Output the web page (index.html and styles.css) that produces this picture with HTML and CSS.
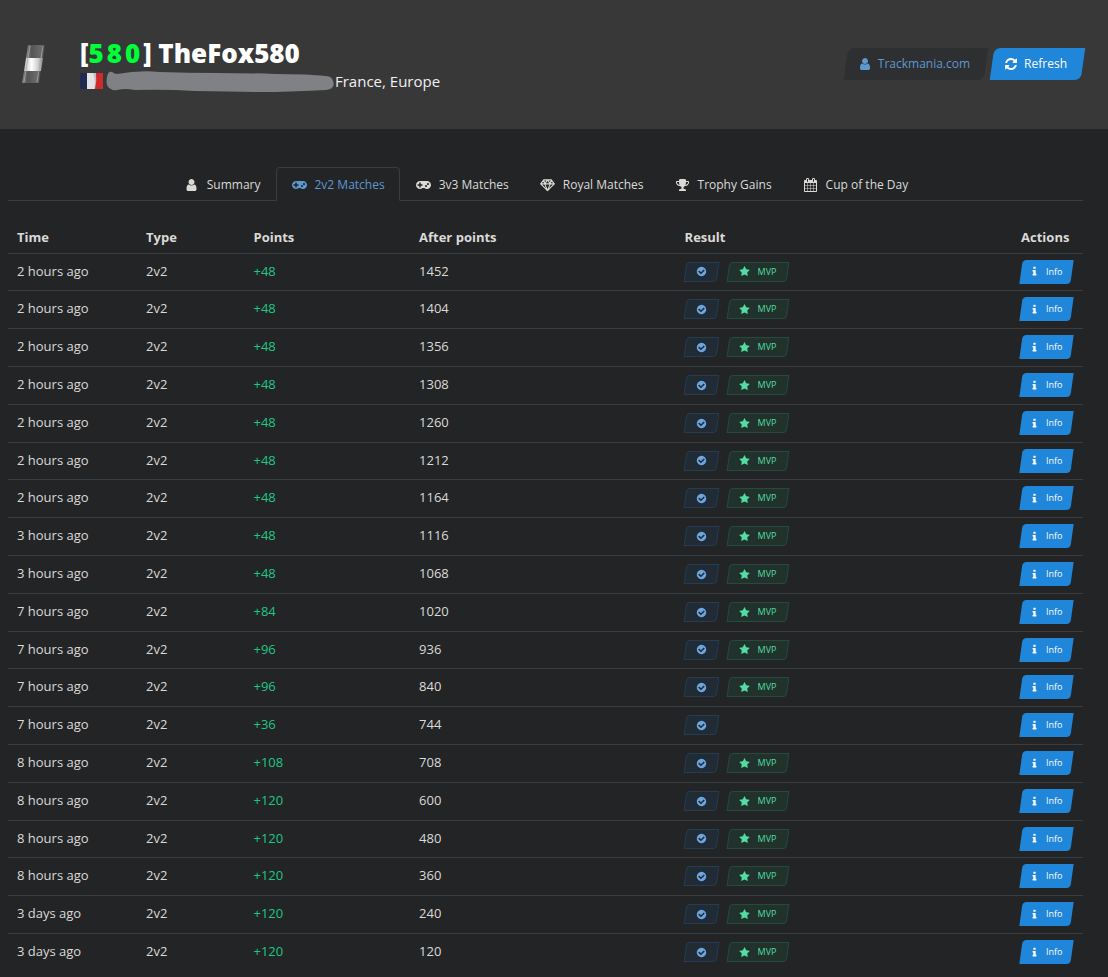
FILE: index.html
```
<!DOCTYPE html>
<html lang="en">
<head>
  <meta charset="UTF-8">
  <meta name="viewport" content="width=device-width, initial-scale=1.0">
  <title>TheFox580 - 2v2 Matches</title>
  <link rel="stylesheet" href="styles.css">
</head>
<body>
  <!-- Icons -->
  <svg class="sprite" aria-hidden="true">
    <symbol id="i-user" viewBox="0 0 1792 1792"><path d="M1536 1399q0 109-62.5 187t-150.5 78h-854q-88 0-150.5-78t-62.5-187q0-85 8.5-160.5t31.5-152 58.5-131 94-89 134.5-34.5q131 128 313 128t313-128q76 0 134.5 34.5t94 89 58.5 131 31.5 152 8.5 160.5zm-256-887q0 159-112.5 271.5t-271.5 112.5-271.5-112.5-112.5-271.5 112.5-271.5 271.5-112.5 271.5 112.5 112.5 271.5z"/></symbol>
    <symbol id="i-refresh" viewBox="0 0 1792 1792"><path d="M1639 1056q0 5-1 7-64 268-268 434.5t-478 166.5q-146 0-282.5-55t-243.5-157l-129 129q-19 19-45 19t-45-19-19-45v-448q0-26 19-45t45-19h448q26 0 45 19t19 45-19 45l-137 137q71 66 161 102t187 36q134 0 250-65t186-179q11-17 53-117 8-23 30-23h192q13 0 22.5 9.5t9.5 22.5zm25-800v448q0 26-19 45t-45 19h-448q-26 0-45-19t-19-45 19-45l138-138q-148-137-349-137-134 0-250 65t-186 179q-11 17-53 117-8 23-30 23h-199q-13 0-22.5-9.5t-9.5-22.5v-7q65-268 270-434.5t480-166.5q146 0 284 55.5t245 156.5l130-129q19-19 45-19t45 19 19 45z"/></symbol>
    <symbol id="i-gamepad" viewBox="0 128 1920 1792"><path d="M832 1088v-128q0-14-9-23t-23-9h-192v-192q0-14-9-23t-23-9h-128q-14 0-23 9t-9 23v192h-192q-14 0-23 9t-9 23v128q0 14 9 23t23 9h192v192q0 14 9 23t23 9h128q14 0 23-9t9-23v-192h192q14 0 23-9t9-23zm576 64q0-53-37.5-90.5t-90.5-37.5-90.5 37.5-37.5 90.5 37.5 90.5 90.5 37.5 90.5-37.5 37.5-90.5zm256-256q0-53-37.5-90.5t-90.5-37.5-90.5 37.5-37.5 90.5 37.5 90.5 90.5 37.5 90.5-37.5 37.5-90.5zm256 128q0 212-150 362t-362 150q-192 0-338-128h-220q-146 128-338 128-212 0-362-150t-150-362 150-362 362-150h896q212 0 362 150t150 362z"/></symbol>
    <symbol id="i-diamond" viewBox="0 0 16 15"><path d="M4 2h8l3.300 4.300L8 13.500.7 6.300zM.7 6.300h14.600M4 2l1 4.300 3 7.200 3-7.200L12 2M5 6.300 8 2l3 4.300" fill="none" stroke="currentColor" stroke-width="1.200" stroke-linejoin="round"/></symbol>
    <symbol id="i-trophy" viewBox="0 0 1792 1792"><path d="M522 883q-74-162-74-371h-256v96q0 78 94.5 162t235.5 113zm1078-275v-96h-256q0 209-74 371 141-29 235.5-113t94.5-162zm128-128v128q0 71-41.5 143t-112 130-173 97.5-215.5 44.5q-42 54-95 95-38 34-52.5 72.5t-14.5 89.5q0 54 30.5 91t97.5 37q75 0 133.5 45.5t58.5 114.5v64q0 14-9 23t-23 9h-832q-14 0-23-9t-9-23v-64q0-69 58.5-114.5t133.5-45.5q67 0 97.5-37t30.5-91q0-51-14.5-89.5t-52.5-72.5q-53-41-95-95-113-5-215.5-44.5t-173-97.5-112-130-41.5-143v-128q0-40 28-68t68-28h288v-96q0-66 47-113t113-47h576q66 0 113 47t47 113v96h288q40 0 68 28t28 68z"/></symbol>
    <symbol id="i-calendar" viewBox="0 0 1792 1792"><path d="M192 1664h288v-288h-288v288zm352 0h320v-288h-320v288zm-352-352h288v-320h-288v320zm352 0h320v-320h-320v320zm-352-384h288v-288h-288v288zm736 736h320v-288h-320v288zm-384-736h320v-288h-320v288zm768 736h288v-288h-288v288zm-384-352h320v-320h-320v320zm-352-864v-288q0-13-9.5-22.5t-22.5-9.5h-64q-13 0-22.5 9.5t-9.5 22.5v288q0 13 9.5 22.5t22.5 9.5h64q13 0 22.5-9.5t9.5-22.5zm736 864h288v-320h-288v320zm-384-384h320v-288h-320v288zm384 0h288v-288h-288v288zm32-480v-288q0-13-9.5-22.5t-22.5-9.5h-64q-13 0-22.5 9.5t-9.5 22.5v288q0 13 9.5 22.5t22.5 9.5h64q13 0 22.5-9.5t9.5-22.5zm384-64v1280q0 52-38 90t-90 38h-1408q-52 0-90-38t-38-90v-1280q0-52 38-90t90-38h128v-96q0-66 47-113t113-47h64q66 0 113 47t47 113v96h384v-96q0-66 47-113t113-47h64q66 0 113 47t47 113v96h128q52 0 90 38t38 90z"/></symbol>
    <symbol id="i-check" viewBox="0 0 1792 1792"><path d="M1412 734q0-28-18-46l-91-90q-19-19-45-19t-45 19l-408 407-226-226q-19-19-45-19t-45 19l-91 90q-18 18-18 46 0 27 18 45l362 362q19 19 45 19 27 0 46-19l543-543q18-18 18-45zm252 162q0 209-103 385.5t-279.5 279.5-385.5 103-385.5-103-279.5-279.5-103-385.5 103-385.5 279.5-279.5 385.5-103 385.5 103 279.5 279.5 103 385.5z"/></symbol>
    <symbol id="i-star" viewBox="0 0 1792 1792"><path d="M1728 647q0 22-26 48l-363 354 86 500q1 7 1 20 0 21-10.5 35.5t-30.5 14.5q-19 0-40-12l-449-236-449 236q-22 12-40 12-21 0-31.5-14.5t-10.5-35.5q0-6 2-20l86-500-364-354q-25-27-25-48 0-37 56-46l502-73 225-455q19-41 49-41t49 41l225 455 502 73q56 9 56 46z"/></symbol>
    <symbol id="i-info" viewBox="0 0 1792 1792"><path d="M1216 1344v128q0 26-19 45t-45 19h-512q-26 0-45-19t-19-45v-128q0-26 19-45t45-19h64v-384h-64q-26 0-45-19t-19-45v-128q0-26 19-45t45-19h384q26 0 45 19t19 45v576h64q26 0 45 19t19 45zm-128-1152v192q0 26-19 45t-45 19h-256q-26 0-45-19t-19-45v-192q0-26 19-45t45-19h256q26 0 45 19t19 45z"/></symbol>
  </svg>

  <header class="player-header">
    <svg class="rank" viewBox="0 0 24 40" aria-hidden="true">
      <defs>
        <linearGradient id="dark"><stop offset="0" stop-color="#888"/><stop offset=".3" stop-color="#555"/><stop offset=".8" stop-color="#6c6c6c"/><stop offset="1" stop-color="#444"/></linearGradient>
        <linearGradient id="light"><stop offset="0" stop-color="#bbb"/><stop offset=".4" stop-color="#fff"/><stop offset=".75" stop-color="#ccc"/><stop offset="1" stop-color="#888"/></linearGradient>
      </defs>
      <path d="M7 1h17l-2 13H5z" fill="url(#dark)"/>
      <path d="M5 14h17l-2 13H3z" fill="url(#light)"/>
      <path d="M3 27h17l-2 12H1z" fill="url(#dark)"/>
      <path d="M9 2 3 38M22 2l-6 36" stroke="#aaa" stroke-width=".8"/>
    </svg>
    <div class="player">
      <h1>[<span class="tag"><span>5</span><span>8</span><span>0</span></span>] TheFox580</h1>
      <div class="location">
        <svg class="flag" viewBox="0 0 23 16" role="img" aria-label="France">
          <path d="M0 0h8v16H0z" fill="#20294f"/>
          <path d="M7 0h9v16H7z" fill="#e3e3e6"/>
          <path d="M13 0q3 8 1 16h3V0z" fill="#bfbfc4"/>
          <path d="M16 0h7v16h-8q2-8 1-16z" fill="#cf2a2c"/>
        </svg>
        <svg class="scribble" viewBox="0 0 229 22" aria-hidden="true"><path d="M1 7Q2 1 6 2q3 2 5 2Q33 0 54 2q28 1 57 1 33 0 58 1 33 0 50 2 7 0 8 5 3 8-7 9-20 1-51 2-35 0-80-1-29-2-60-1-10-2-18 0-4 1-6-1Q-1 17 1 7z" fill="#808184"/></svg>
        <span>France, Europe</span>
      </div>
    </div>
    <div class="header-actions">
      <a class="btn btn-dark" href="#"><svg class="icon"><use href="#i-user"/></svg>Trackmania.com</a>
      <button class="btn btn-primary" type="button"><svg class="icon"><use href="#i-refresh"/></svg>Refresh</button>
    </div>
  </header>

  <main>
    <nav class="tabs">
      <a href="#"><svg class="icon"><use href="#i-user"/></svg>Summary</a>
      <a href="#" class="active"><svg class="icon"><use href="#i-gamepad"/></svg>2v2 Matches</a>
      <a href="#"><svg class="icon"><use href="#i-gamepad"/></svg>3v3 Matches</a>
      <a href="#"><svg class="icon"><use href="#i-diamond"/></svg>Royal Matches</a>
      <a href="#"><svg class="icon"><use href="#i-trophy"/></svg>Trophy Gains</a>
      <a href="#"><svg class="icon"><use href="#i-calendar"/></svg>Cup of the Day</a>
    </nav>

    <table id="matches">
      <thead>
        <tr>
          <th class="col-time">Time</th>
          <th class="col-type">Type</th>
          <th class="col-points">Points</th>
          <th class="col-after">After points</th>
          <th class="col-result">Result</th>
          <th class="col-actions">Actions</th>
        </tr>
      </thead>
      <tbody></tbody>
    </table>
  </main>

  <script>
    // [time, points gained, points after, mvp]
    const matches = [
      ["2 hours ago", 48, 1452, true],
      ["2 hours ago", 48, 1404, true],
      ["2 hours ago", 48, 1356, true],
      ["2 hours ago", 48, 1308, true],
      ["2 hours ago", 48, 1260, true],
      ["2 hours ago", 48, 1212, true],
      ["2 hours ago", 48, 1164, true],
      ["3 hours ago", 48, 1116, true],
      ["3 hours ago", 48, 1068, true],
      ["7 hours ago", 84, 1020, true],
      ["7 hours ago", 96, 936, true],
      ["7 hours ago", 96, 840, true],
      ["7 hours ago", 36, 744, false],
      ["8 hours ago", 108, 708, true],
      ["8 hours ago", 120, 600, true],
      ["8 hours ago", 120, 480, true],
      ["8 hours ago", 120, 360, true],
      ["3 days ago", 120, 240, true],
      ["3 days ago", 120, 120, true]
    ];

    const icon = name => `<svg class="icon"><use href="#i-${name}"/></svg>`;
    const tbody = document.querySelector("#matches tbody");
    matches.forEach(([time, points, after, mvp]) => {
      const tr = document.createElement("tr");
      tr.innerHTML = `<td>${time}</td>
                      <td>2v2</td>
                      <td class="gain">+${points}</td>
                      <td>${after}</td>
                      <td class="result"><div class="badges">
                        <span class="badge badge-win">${icon("check")}</span>
                        ${mvp ? `<span class="badge badge-mvp">${icon("star")}MVP</span>` : ""}
                      </div></td>
                      <td class="actions"><button class="btn btn-primary btn-sm" type="button">${icon("info")}Info</button></td>`;
      tbody.appendChild(tr);
    });
  </script>
</body>
</html>
```
FILE: styles.css
```
* { box-sizing: border-box; }
body { margin: 0; background: #222426; color: #dcdad7; font-family: "Open Sans", "Noto Sans", sans-serif; font-size: 13px; line-height: 20px; }
a { color: inherit; text-decoration: none; }
.sprite { display: none; }
.icon { width: 14px; height: 14px; fill: currentColor; flex: none; }

/* Header */
.player-header { display: flex; align-items: center; min-height: 129px; padding: 0 23px 1px 21px; background: #383838; }
.rank { width: 24px; height: 40px; margin-right: 35px; }
.player { padding-top: 2px; }
.player h1 { margin: 0; color: #fff; font-size: 26px; font-weight: 800; line-height: 28px; }
.tag { display: inline-flex; gap: 3px; padding-right: 3px; color: #00ff38; }
.location { display: flex; align-items: center; margin-top: 3px; color: #f0f0f0; font-size: 15px; }
.flag { width: 23px; height: 16px; margin-right: 3px; }
.scribble { width: 229px; height: 22px; }
.header-actions { display: flex; gap: 2px; margin-left: auto; }

/* Slanted buttons and badges, the shape is painted behind the text */
.btn, .badge { position: relative; z-index: 0; display: inline-flex; align-items: center; justify-content: center; }
.btn { gap: 6px; height: 32px; padding: 0 18px 0 14px; border: none; background: none; font: inherit; font-size: 12px; cursor: pointer; }
.btn::before, .badge::before { content: ""; position: absolute; inset: 0 2px; z-index: -1; border-radius: 6px 0; transform: skewX(-8deg); }
.btn-dark { color: #5f97d0; }
.btn-dark::before { background: #2d2f31; }
.btn-primary { color: #fff; }
.btn-primary::before { background: #1f86d9; }
.btn-sm { height: 24px; padding: 0 12px 0 10px; font-size: 9px; font-weight: 500; }
.btn-sm::before { border-radius: 4px 0; }
.btn-sm .icon { width: 11px; height: 11px; }

/* Tabs */
.tabs { display: flex; justify-content: center; font-size: 12px; border-bottom: 1px solid #3a3d3f; }
.tabs a { display: flex; align-items: center; gap: 8px; height: 34px; margin-bottom: -1px; padding: 2px 14px 0 15px; border: 1px solid transparent; border-radius: 4px 4px 0 0; }
.tabs a.active { color: #5f97d0; background: #222426; border-color: #3a3d3f #3a3d3f #222426; }
.tabs .icon { width: 15px; }

/* Matches */
main { padding: 38px 25px 0 8px; }
table { width: 100%; margin-top: 20px; border-collapse: collapse; table-layout: fixed; }
th, td { padding: 0 9px; text-align: left; border-bottom: 1px solid #3a3d3f; }
th { height: 32px; font-weight: 700; }
td { height: 38px; padding-bottom: 2px; }
tr:nth-child(5n+1) td { height: 37px; }
tr:last-child td { border-bottom: none; }
.col-time { width: 12%; }
.col-type { width: 10%; }
.col-points { width: 15.4%; }
.col-after { width: 24.7%; }
.col-actions { width: 6.6%; }
.result { padding: 0 8px; }
.actions { padding: 0 7px; }
.gain { color: #1fc785; }
.badges { display: flex; gap: 8px; }
.badge { height: 20px; padding: 0 12px; gap: 8px; font-size: 9px; }
.badge .icon { width: 11px; height: 11px; }
.badge::before { inset: 0 1px; border: 1px solid; border-radius: 4px 0; }
.badge-win { color: #6ca6e0; }
.badge-win::before { background: #212b35; border-color: #263c50; }
.badge-mvp { color: #52dda5; }
.badge-mvp::before { background: #21322c; border-color: #264a3d; }
```
